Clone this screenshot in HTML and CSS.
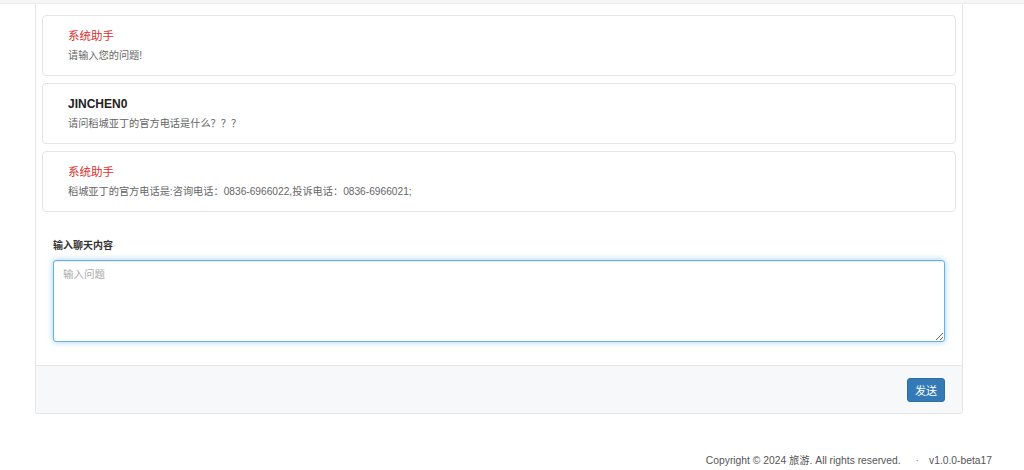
FILE: index.html
```html
<!DOCTYPE html>
<html lang="zh-CN">
<head>
    <meta charset="UTF-8">
    <title>旅游 - 智能问答</title>
    <link rel="stylesheet" href="styles.css">
</head>
<body>
    <div class="top-bar"></div>

    <div class="panel">
        <div class="panel-body">
            <!-- chat history -->
            <div class="message">
                <div class="sender system">系统助手</div>
                <div class="content">请输入您的问题!</div>
            </div>
            <div class="message">
                <div class="sender user">JINCHEN0</div>
                <div class="content">请问稻城亚丁的官方电话是什么？？？</div>
            </div>
            <div class="message">
                <div class="sender system">系统助手</div>
                <div class="content">稻城亚丁的官方电话是:咨询电话：0836-6966022,投诉电话：0836-6966021;</div>
            </div>

            <!-- input area -->
            <div class="form-group">
                <label class="form-label" for="question">输入聊天内容</label>
                <textarea id="question" class="form-control" placeholder="输入问题" autofocus></textarea>
            </div>
        </div>
        <div class="panel-footer">
            <button class="btn-send" type="button">发送</button>
        </div>
    </div>

    <div class="page-footer">
        <span>Copyright © 2024 旅游. All rights reserved.</span>
        <span class="dot">·</span>
        <span>v1.0.0-beta17</span>
    </div>
</body>
</html>
```

FILE: styles.css
```css
body {
    margin: 0;
    padding: 0;
    background-color: #fff;
    font-family: "Liberation Sans", Arial, "Noto Sans CJK SC", sans-serif;
    color: #333;
    overflow: hidden;
}

.top-bar {
    height: 3px;
    border-bottom: 1px solid #ececec;
    background-color: #f6f6f6;
}

.panel {
    width: 926px;
    margin-left: 35px;
    border: 1px solid #e6e6e6;
    border-top: none;
    border-radius: 0 0 3px 3px;
    background-color: #fff;
}

.panel-body {
    padding: 11px 6px 23px 6px;
}

.message {
    border: 1px solid #e4e4e4;
    border-radius: 4px;
    padding: 11px 25px;
    margin-bottom: 7px;
}

.sender {
    font-size: 11.5px;
    line-height: 18px;
    margin-bottom: 3px;
}

.sender.system {
    color: #d9302f;
}

.sender.user {
    font-size: 12px;
    color: #222;
    font-weight: bold;
}

.content {
    font-size: 10.2px;
    line-height: 16px;
    color: #666;
}

.form-group {
    padding: 19px 11px 0 11px;
}

.form-label {
    display: block;
    font-size: 10px;
    line-height: 15px;
    font-weight: bold;
    color: #333;
    margin-bottom: 7px;
}

.form-control {
    display: block;
    box-sizing: border-box;
    width: 100%;
    height: 82px;
    padding: 5px 9px;
    font-family: inherit;
    font-size: 10.5px;
    line-height: 16px;
    color: #555;
    border: 1px solid #66afe9;
    border-radius: 3px;
    outline: none;
    box-shadow: inset 0 1px 1px rgba(0, 0, 0, 0.075), 0 0 6px rgba(102, 175, 233, 0.6);
    resize: vertical;
}

.form-control::placeholder {
    color: #aaa;
}

.panel-footer {
    display: flex;
    justify-content: flex-end;
    padding: 12px 17px 11px 17px;
    background-color: #f7f8fa;
    border-top: 1px solid #e6e6e6;
    border-radius: 0 0 3px 3px;
}

.btn-send {
    height: 24px;
    padding: 0 7px;
    font-family: inherit;
    font-size: 11px;
    color: #fff;
    background-color: #337ab7;
    border: 1px solid #2e6da4;
    border-radius: 3px;
    cursor: pointer;
}

.page-footer {
    display: flex;
    justify-content: flex-end;
    gap: 10px;
    padding: 39px 32px 0 0;
    font-size: 10.3px;
    line-height: 16px;
    color: #555;
}

.page-footer .dot {
    margin-left: 5px;
    color: #777;
}
```
